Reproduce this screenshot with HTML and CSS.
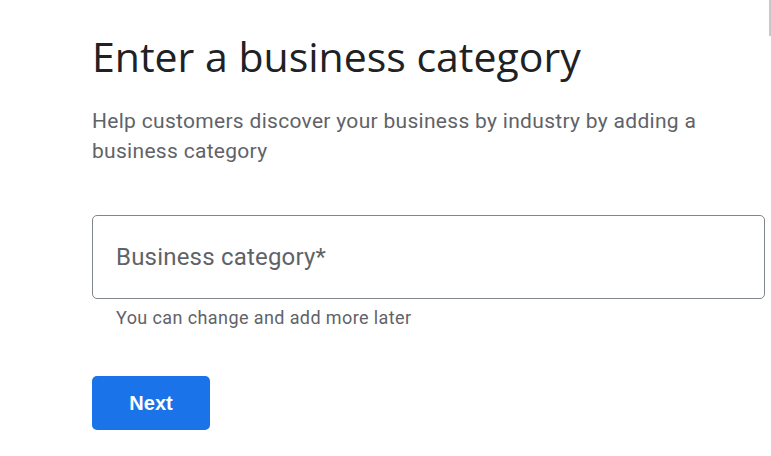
FILE: index.html
```html
<!DOCTYPE html>
<html lang="en">

<head>
    <meta charset="UTF-8">
    <meta name="viewport" content="width=device-width, initial-scale=1.0">
    <title>Business category</title>

    <link rel="stylesheet" href="styles.css">

</head>

<body>
    <div class="edge"></div>
    <main class="page">
        <h1 class="title">Enter a business category</h1>
        <p class="intro">Help customers discover your business by industry by adding a business category</p>

        <div class="field">
            <div class="box">
                <span class="label">Business category*</span>
            </div>
            <div class="helper">You can change and add more later</div>
        </div>

        <button class="next">Next</button>
    </main>
</body>

</html>
```

FILE: styles.css
```css
* {
    padding: 0px;
    margin: 0px;
    box-sizing: border-box;
}

body {
    background-color: #fff;
    font-family: Roboto, "Liberation Sans", Arial, sans-serif;
    width: 771px;
    height: 456px;
    overflow: hidden;
    position: relative;
}

.edge {
    position: absolute;
    top: 0;
    right: 0;
    width: 2px;
    height: 36px;
    background-color: #c8c8c8;
}

.page {
    padding: 28px 6px 0 92px;
    display: flex;
    flex-direction: column;
}

.title {
    font-family: "Open Sans", Roboto, sans-serif;
    font-weight: 400;
    font-size: 41px;
    line-height: 56px;
    color: #202124;
    letter-spacing: 0px;
}

.intro {
    margin-top: 22px;
    width: 640px;
    font-size: 21px;
    line-height: 30px;
    color: #5f6368;
    letter-spacing: 0.3px;
}

.field {
    margin-top: 49px;
}

.box {
    height: 84px;
    border: 1px solid #80868b;
    border-radius: 5px;
    display: flex;
    align-items: center;
    padding-left: 23px;
}

.label {
    font-size: 24px;
    color: #5f6368;
    letter-spacing: 0.2px;
}

.helper {
    padding: 7px 0 0 24px;
    font-size: 18px;
    line-height: 24px;
    color: #5f6368;
    letter-spacing: 0.4px;
}

.next {
    margin-top: 46px;
    width: 118px;
    height: 54px;
    border: none;
    border-radius: 5px;
    background-color: #1a73e8;
    color: #fff;
    font-family: "Liberation Sans", Arial, sans-serif;
    font-weight: 700;
    font-size: 20px;
}
```
